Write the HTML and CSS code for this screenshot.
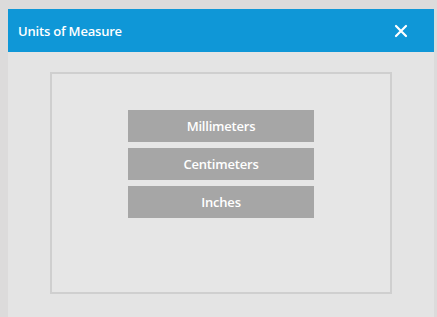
FILE: index.html
```html
<!DOCTYPE html>
<html>
<head>
<meta charset="utf-8">
<link rel="stylesheet" href="styles.css">
</head>
<body>
<div class="screen">
  <div class="dialog">
    <div class="titlebar">
      <span class="title">Units of Measure</span>
      <svg class="close" width="14" height="14" viewBox="0 0 14 14"><path d="M2 2 L12 12 M12 2 L2 12" stroke="#ffffff" stroke-width="2.2" stroke-linecap="round"/></svg>
    </div>
    <div class="body">
      <div class="panel">
        <div class="options">
          <div class="btn">Millimeters</div>
          <div class="btn">Centimeters</div>
          <div class="btn">Inches</div>
        </div>
      </div>
    </div>
  </div>
</div>
</body>
</html>
```

FILE: styles.css
```css
html, body {
  margin: 0;
  padding: 0;
  width: 437px;
  height: 317px;
  overflow: hidden;
  background: #dcdbdb;
  font-family: "Open Sans", "DejaVu Sans", sans-serif;
}
.screen {
  padding: 9px 3px 0 8px;
  height: 317px;
  box-sizing: border-box;
}
.dialog {
  height: 100%;
  background: #e4e4e4;
  display: flex;
  flex-direction: column;
}
.titlebar {
  height: 43px;
  background: #0f97d7;
  display: flex;
  align-items: center;
  justify-content: space-between;
  padding: 0 26px 0 10px;
}
.title {
  color: #ffffff;
  font-size: 13px;
  font-weight: 600;
  letter-spacing: -0.2px;
}
.close { display: block; }
.body {
  padding: 20px 42px 0 42px;
}
.panel {
  height: 222px;
  border: 2px solid #cfcfcf;
  background: #e6e6e6;
  box-sizing: border-box;
  display: flex;
  justify-content: center;
  padding-top: 36px;
}
.options {
  display: flex;
  flex-direction: column;
  gap: 6px;
}
.btn {
  width: 186px;
  height: 32px;
  background: #a6a6a6;
  color: #ffffff;
  font-size: 13px;
  font-weight: 600;
  display: flex;
  align-items: center;
  justify-content: center;
  letter-spacing: -0.2px;
}
```
